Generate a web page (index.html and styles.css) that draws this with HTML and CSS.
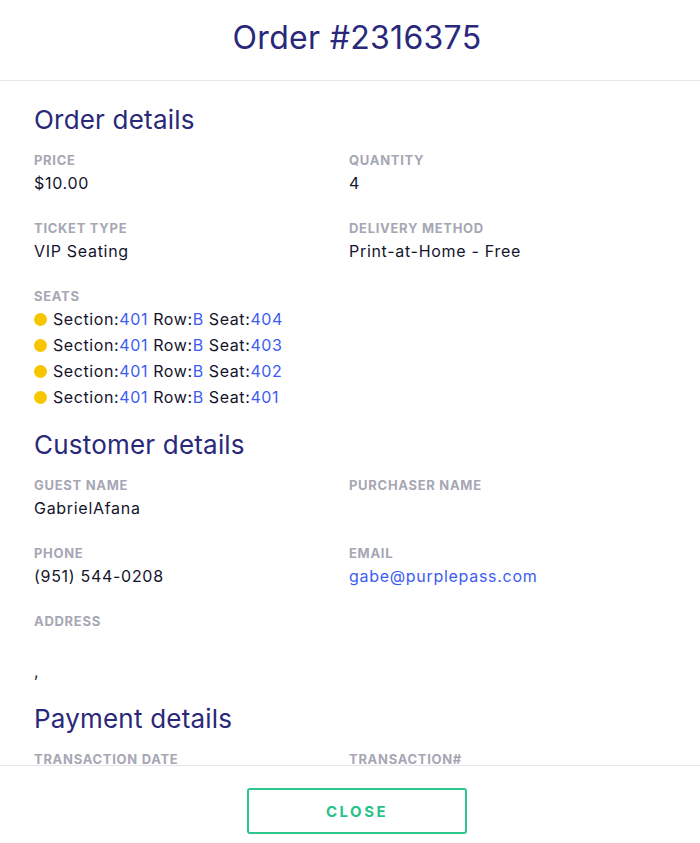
FILE: index.html
```html
<!DOCTYPE html>
<html lang="en">
<head>
    <meta charset="UTF-8">
    <meta name="viewport" content="width=device-width, initial-scale=1.0">
    <title>Order #2316375</title>
    <link rel="stylesheet" href="styles.css">
</head>
<body>
    <div class="modal">
        <div class="modal-header">
            <h1 class="modal-title">Order #2316375</h1>
        </div>

        <div class="modal-body">
            <h2 class="section-title">Order details</h2>
            <div class="field-grid">
                <div class="field">
                    <div class="field-label">Price</div>
                    <div class="field-value">$10.00</div>
                </div>
                <div class="field">
                    <div class="field-label">Quantity</div>
                    <div class="field-value">4</div>
                </div>
                <div class="field">
                    <div class="field-label">Ticket type</div>
                    <div class="field-value">VIP Seating</div>
                </div>
                <div class="field">
                    <div class="field-label">Delivery method</div>
                    <div class="field-value">Print-at-Home - Free</div>
                </div>
                <div class="field field-wide">
                    <div class="field-label seats-label">Seats</div>
                    <ul class="seat-list">
                        <li class="seat">Section:<span class="hl">401</span> Row:<span class="hl">B</span> Seat:<span class="hl">404</span></li>
                        <li class="seat">Section:<span class="hl">401</span> Row:<span class="hl">B</span> Seat:<span class="hl">403</span></li>
                        <li class="seat">Section:<span class="hl">401</span> Row:<span class="hl">B</span> Seat:<span class="hl">402</span></li>
                        <li class="seat">Section:<span class="hl">401</span> Row:<span class="hl">B</span> Seat:<span class="hl">401</span></li>
                    </ul>
                </div>
            </div>

            <h2 class="section-title">Customer details</h2>
            <div class="field-grid">
                <div class="field">
                    <div class="field-label">Guest name</div>
                    <div class="field-value">GabrielAfana</div>
                </div>
                <div class="field">
                    <div class="field-label">Purchaser name</div>
                    <div class="field-value"></div>
                </div>
                <div class="field">
                    <div class="field-label">Phone</div>
                    <div class="field-value">(951) 544-0208</div>
                </div>
                <div class="field">
                    <div class="field-label">Email</div>
                    <div class="field-value"><a class="link" href="#">gabe@purplepass.com</a></div>
                </div>
                <div class="field field-wide">
                    <div class="field-label">Address</div>
                    <div class="field-value address"><br>,</div>
                </div>
            </div>

            <h2 class="section-title">Payment details</h2>
            <div class="field-grid">
                <div class="field">
                    <div class="field-label">Transaction date</div>
                    <div class="field-value">06/14/2023</div>
                </div>
                <div class="field">
                    <div class="field-label">Transaction#</div>
                    <div class="field-value">0</div>
                </div>
            </div>
        </div>

        <div class="modal-footer">
            <button class="close-button">Close</button>
        </div>
    </div>
</body>
</html>
```

FILE: styles.css
```css
* {
    box-sizing: border-box;
}

body {
    margin: 0;
    background: #fff;
    font-family: "Inter", "Noto Sans", sans-serif;
    color: #14142b;
}

.modal {
    display: flex;
    flex-direction: column;
    height: 843px;
    width: 700px;
}

.modal-header {
    flex: 0 0 81px;
    display: flex;
    align-items: center;
    justify-content: center;
    border-bottom: 1px solid #e6e6ea;
    padding: 0 0 6px 14px;
}

.modal-title {
    margin: 0;
    font-size: 32px;
    font-weight: 400;
    color: #29287a;
    letter-spacing: 0.3px;
}

.modal-body {
    flex: 1;
    overflow: hidden;
    padding: 21px 34px 0;
}

.section-title {
    margin: 0 0 13px;
    font-size: 26px;
    line-height: 36px;
    font-weight: 400;
    color: #29287a;
    letter-spacing: 0.2px;
}

.field-grid {
    display: grid;
    grid-template-columns: 315px 1fr;
    row-gap: 24px;
    margin-bottom: 17px;
}

.field-wide {
    grid-column: 1 / -1;
}

.field-label {
    font-size: 13px;
    line-height: 18px;
    font-weight: 700;
    letter-spacing: 0.7px;
    text-transform: uppercase;
    color: #a6a7b4;
    margin-bottom: 2px;
}

.seats-label {
    margin-bottom: 1px;
}

.field-value {
    font-size: 16px;
    line-height: 24px;
    min-height: 24px;
    letter-spacing: 0.7px;
}

.address {
    line-height: 26px;
}

.link {
    color: #3d5cf2;
    text-decoration: none;
}

.seat-list {
    list-style: none;
    margin: 0;
    padding: 0;
}

.seat {
    display: flex;
    align-items: center;
    font-size: 16px;
    line-height: 26px;
    letter-spacing: 0.6px;
    white-space: pre;
}

.seat::before {
    content: "";
    width: 13px;
    height: 13px;
    border-radius: 50%;
    background: #f7c600;
    margin-right: 6px;
}

.hl {
    color: #3d5cf2;
}

.modal-footer {
    flex: 0 0 78px;
    border-top: 1px solid #e6e6ea;
    display: flex;
    justify-content: center;
    padding: 22px 0 0 14px;
}

.close-button {
    width: 220px;
    height: 46px;
    background: #fff;
    border: 2px solid #2ec68c;
    border-radius: 3px;
    color: #25c289;
    font-family: "Inter", "Noto Sans", sans-serif;
    font-size: 15px;
    font-weight: 700;
    letter-spacing: 2.5px;
    text-transform: uppercase;
    cursor: pointer;
}
```
